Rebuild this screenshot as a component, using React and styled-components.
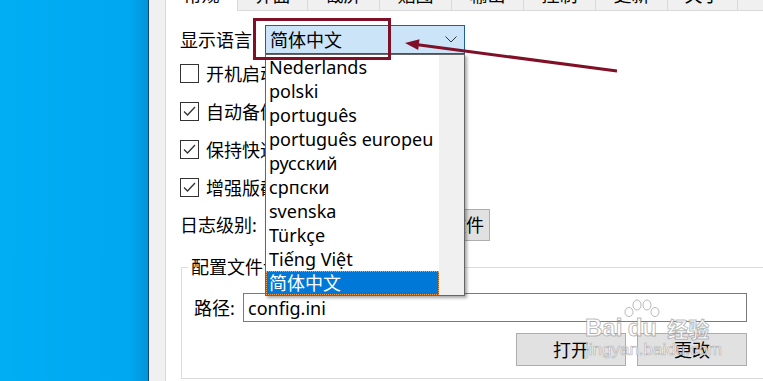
import React from 'react';
import styled, { createGlobalStyle } from 'styled-components';

const GlobalStyle = createGlobalStyle`
  html, body { margin: 0; padding: 0; }
  body {
    font-family: "Noto Sans", "Noto Sans CJK SC", sans-serif;
    font-size: 18px;
    color: #000;
    overflow: hidden;
  }
`;

const Screen = styled.div`
  position: relative;
  display: flex;
  width: 763px;
  height: 381px;
  overflow: hidden;
`;

const Desktop = styled.div`
  width: 148px;
  flex-shrink: 0;
  background: linear-gradient(90deg, #00aef4 0%, #00a7f1 88%, #0394d8 100%);
  border-right: 1px solid #12476a;
`;

const Window = styled.div`
  flex: 1;
  display: flex;
  flex-direction: column;
  min-width: 0;
  background: #f0f0f0;
  padding-left: 16px;
`;

const TabStrip = styled.div`
  display: flex;
  margin-top: -22px;
  height: 33px;
  flex-shrink: 0;
`;

const Tab = styled.div`
  width: ${p => p.$w}px;
  flex-shrink: 0;
  box-sizing: border-box;
  display: flex;
  align-items: center;
  justify-content: center;
  line-height: 20px;
  background: ${p => (p.$active ? '#fff' : '#f0f0f0')};
  border-right: 1px solid #d9d9d9;
  border-left: ${p => (p.$active ? '1px solid #d9d9d9' : 'none')};
  border-bottom: ${p => (p.$active ? 'none' : '1px solid #d9d9d9')};
  padding-top: ${p => (p.$active ? '0' : '2px')};
`;

const TabFiller = styled.div`
  flex: 1;
  border-bottom: 1px solid #d9d9d9;
`;

const Panel = styled.div`
  flex: 1;
  background: #fff;
  border-left: 1px solid #d9d9d9;
  padding-left: 14px;
  display: flex;
  flex-direction: column;
`;

const LangRow = styled.div`
  display: flex;
  align-items: center;
  height: 29px;
  margin-top: 14px;
`;

const Label = styled.span`
  width: ${p => p.$w}px;
  flex-shrink: 0;
  white-space: nowrap;
  line-height: 24px;
`;

const Combo = styled.div`
  width: 200px;
  height: 29px;
  box-sizing: border-box;
  display: flex;
  align-items: center;
  justify-content: space-between;
  padding: 0 7px 0 4px;
  background: #cce4f7;
  border: 1px solid #1f5f9c;
  line-height: 24px;
`;

const CheckRow = styled.div`
  display: flex;
  align-items: center;
  height: 38px;
  gap: 7px;
  white-space: nowrap;
  &:first-of-type { margin-top: 4px; }
`;

const Box = styled.span`
  width: 19px;
  height: 19px;
  box-sizing: border-box;
  border: 1px solid #333;
  display: flex;
  align-items: center;
  justify-content: center;
  flex-shrink: 0;
`;

const LogRow = styled.div`
  display: flex;
  align-items: center;
  height: 32px;
  margin-top: 3px;
`;

const LevelCombo = styled.div`
  width: 100px;
  height: 29px;
  margin-right: 5px;
  box-sizing: border-box;
  border: 1px solid #adadad;
  background: #e1e1e1;
`;

const Button = styled.button`
  width: ${p => p.$w}px;
  height: ${p => p.$h}px;
  box-sizing: border-box;
  background: #e1e1e1;
  border: 1px solid #adadad;
  font: inherit;
  color: #000;
  padding: 0;
  line-height: 24px;
`;

const Group = styled.fieldset`
  margin: 14px 0 0 1px;
  width: 589px;
  box-sizing: border-box;
  padding: 0 0 12px 12px;
  border: 1px solid #dcdcdc;
  min-width: 0;
`;

const Legend = styled.legend`
  padding: 0 3px;
  margin-left: -6px;
  line-height: 24px;
`;

const PathRow = styled.div`
  display: flex;
  align-items: center;
  margin-top: 14px;
`;

const PathInput = styled.div`
  width: 504px;
  height: 29px;
  box-sizing: border-box;
  border: 1px solid #7a7a7a;
  padding-left: 4px;
  display: flex;
  align-items: center;
  line-height: 24px;
`;

const ButtonRow = styled.div`
  display: flex;
  gap: 11px;
  margin-top: 11px;
  padding-left: 322px;
`;

const Dropdown = styled.div`
  position: absolute;
  left: 265px;
  top: 54px;
  width: 200px;
  height: 242px;
  box-sizing: border-box;
  display: flex;
  background: #fff;
  border: 1px solid #666;
  box-shadow: 2px 2px 3px rgba(0, 0, 0, 0.35);
`;

const List = styled.div`
  flex: 1;
  display: flex;
  flex-direction: column;
`;

const Item = styled.div`
  height: 24px;
  line-height: 22px;
  white-space: nowrap;
  overflow: hidden;
  box-sizing: border-box;
  background: ${p => (p.$sel ? '#0078d7' : 'transparent')};
  color: ${p => (p.$sel ? '#fff' : '#000')};
  border: 1px dotted ${p => (p.$sel ? '#f0a050' : 'transparent')};
  padding-left: 2px;
`;

const ScrollTrack = styled.div`
  width: 25px;
  background: #f0f0f0;
`;

const Highlight = styled.div`
  position: absolute;
  left: 253px;
  top: 18px;
  width: 138px;
  height: 42px;
  box-sizing: border-box;
  border: 3px solid #7f1028;
`;

const ArrowLayer = styled.svg`
  position: absolute;
  left: 0;
  top: 0;
  pointer-events: none;
`;

const Watermark = styled.div`
  position: absolute;
  left: 585px;
  top: 299px;
  display: flex;
  flex-direction: column;
  align-items: flex-start;
  color: rgba(255, 255, 255, 0.9);
  -webkit-text-stroke: 1px rgba(140, 140, 140, 0.6);
  pointer-events: none;
`;

const MarkTop = styled.div`
  display: flex;
  align-items: flex-end;
  font-family: "Liberation Sans", sans-serif;
  font-weight: bold;
  font-size: 24px;
  line-height: 22px;
`;

const DuBlock = styled.div`
  display: flex;
  flex-direction: column;
  align-items: center;
  margin-left: 1px;
`;

const MarkCjk = styled.span`
  font-family: "Noto Sans CJK SC", sans-serif;
  font-size: 21px;
  margin-left: 6px;
`;

const MarkUrl = styled.div`
  font-family: "Liberation Sans", sans-serif;
  font-size: 17px;
  line-height: 18px;
  margin-top: 2px;
  -webkit-text-stroke: 0.7px rgba(140, 140, 140, 0.6);
`;

const tabs = [
  ['常规', 73, true],
  ['界面', 70],
  ['截屏', 72],
  ['贴图', 72],
  ['输出', 72],
  ['控制', 72],
  ['更新', 72],
  ['关于', 70],
];

const checks = [
  ['开机启动', false],
  ['自动备份截图', true],
  ['保持快速启动', true],
  ['增强版截屏', true],
];

const languages = [
  'Nederlands', 'polski', 'português', 'português europeu', 'русский',
  'српски', 'svenska', 'Türkçe', 'Tiếng Việt', '简体中文',
];

const Check = () => (
  <svg width="15" height="15" viewBox="0 0 15 15">
    <polyline points="2,7.5 5.5,11 13,3" fill="none" stroke="#333" strokeWidth="1.3" />
  </svg>
);

const Chevron = () => (
  <svg width="12" height="7" viewBox="0 0 12 7">
    <polyline points="0.5,0.5 6,6 11.5,0.5" fill="none" stroke="#333" strokeWidth="1" />
  </svg>
);

const Paw = () => (
  <svg width="38" height="18" viewBox="0 0 38 18">
    <g fill="rgba(255,255,255,0.9)" stroke="rgba(140,140,140,0.6)" strokeWidth="1">
      <ellipse cx="6" cy="13" rx="4" ry="4.5" />
      <ellipse cx="14" cy="6" rx="4" ry="5" />
      <ellipse cx="24" cy="6" rx="4" ry="5" />
      <ellipse cx="32" cy="13" rx="4" ry="4.5" />
    </g>
  </svg>
);

export default function App() {
  return (
    <>
      <GlobalStyle />
      <Screen>
        <Desktop />
        <Window>
          <TabStrip>
            {tabs.map(([t, w, a]) => (
              <Tab key={t} $w={w} $active={a}>{t}</Tab>
            ))}
            <TabFiller />
          </TabStrip>
          <Panel>
            <LangRow>
              <Label $w={85}>显示语言</Label>
              <Combo>
                <span>简体中文</span>
                <Chevron />
              </Combo>
            </LangRow>
            {checks.map(([t, c]) => (
              <CheckRow key={t}>
                <Box>{c && <Check />}</Box>
                <span>{t}</span>
              </CheckRow>
            ))}
            <LogRow>
              <Label $w={85}>日志级别:</Label>
              <LevelCombo />
              <Button $w={120} $h={32}>打开日志文件</Button>
            </LogRow>
            <Group>
              <Legend>配置文件设置</Legend>
              <PathRow>
                <Label $w={49}>路径:</Label>
                <PathInput>config.ini</PathInput>
              </PathRow>
              <ButtonRow>
                <Button $w={110} $h={33}>打开</Button>
                <Button $w={110} $h={33}>更改</Button>
              </ButtonRow>
            </Group>
          </Panel>
        </Window>

        <Dropdown>
          <List>
            {languages.map(l => (
              <Item key={l} $sel={l === '简体中文'}>{l}</Item>
            ))}
          </List>
          <ScrollTrack />
        </Dropdown>

        <Highlight />
        <ArrowLayer width="763" height="381">
          <line x1="617" y1="71" x2="416" y2="44.5" stroke="#7f1028" strokeWidth="3" />
          <polygon points="405,43 419.5,39.2 418.2,50" fill="#7f1028" />
        </ArrowLayer>

        <Watermark>
          <MarkTop>
            <span>Bai</span>
            <DuBlock>
              <Paw />
              <span>du</span>
            </DuBlock>
            <MarkCjk>经验</MarkCjk>
          </MarkTop>
          <MarkUrl>jingyan.baidu.com</MarkUrl>
        </Watermark>
      </Screen>
    </>
  );
}
